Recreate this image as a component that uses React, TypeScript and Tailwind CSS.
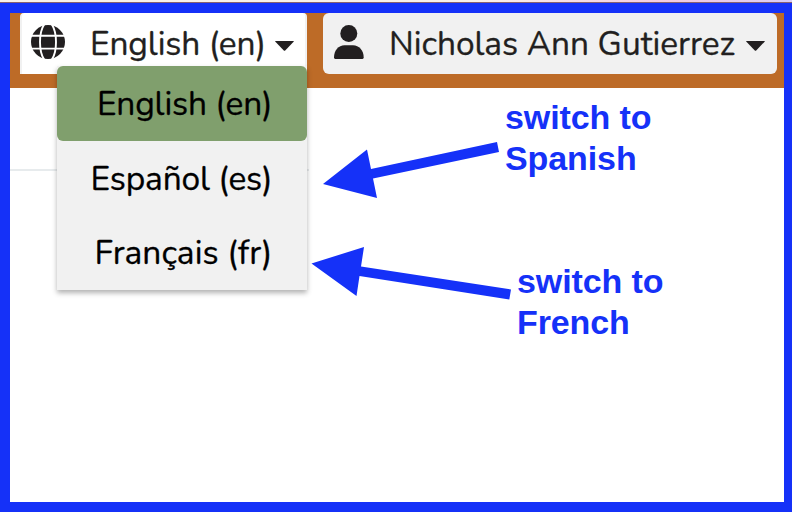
function Caret() {
  return (
    <svg className="h-[10px] w-[19px] shrink-0" viewBox="0 0 19 10" fill="#221f20">
      <path d="M0.6 0H18.4Q19.2 0 18.6 0.7L10.2 9.5Q9.5 10.2 8.8 9.5L0.4 0.7Q-0.2 0 0.6 0Z" />
    </svg>
  );
}

function Globe() {
  return (
    <svg className="mb-[4px] size-[34px] shrink-0" viewBox="0 0 34 34">
      <circle cx="17" cy="17" r="17" fill="#221f20" />
      <g fill="none" stroke="#fff" strokeWidth="1.9">
        <path d="M0 10.7H34M0 23.6H34" />
        <path d="M13.5 -1C9.2 5 9 11 9 17S9.2 29 13.5 35M20.5 -1C24.8 5 25 11 25 17S24.8 29 20.5 35" />
      </g>
    </svg>
  );
}

function Person() {
  return (
    <svg className="mb-[4px] h-[34px] w-[30px] shrink-0" viewBox="0 0 30 34" fill="#221f20">
      <circle cx="14.8" cy="8.5" r="8.5" />
      <path d="M1.2 34Q0 34 0 32.6C0 25.2 4.5 20.2 10.5 20.2H19C25 20.2 29.7 25.2 29.7 32.6Q29.7 34 28.5 34Z" />
    </svg>
  );
}

function Menu() {
  return (
    <ul className="absolute left-[37px] top-[53px] h-[224px] w-[250px] bg-[#f1f1f1] text-right text-black shadow-[0_3px_5px_rgba(0,0,0,0.3)]">
      <li className="h-[75px] rounded-[6px] bg-[#809f6d] pr-[34.5px] leading-[77px] tracking-[-0.15px]">English (en)</li>
      <li className="h-[75px] pr-[34.5px] leading-[77px] tracking-[-0.15px]">Español (es)</li>
      <li className="h-[74px] pr-[34.5px] leading-[75px] tracking-[0.05px]">Français (fr)</li>
    </ul>
  );
}

export default function App() {
  return (
    <div className="relative flex h-[512px] w-[792px] flex-col overflow-hidden bg-white font-['Nunito','Lato',sans-serif] text-[33.5px] [-webkit-text-stroke:0.3px_currentColor]">
      <div className="h-[3px] shrink-0 border-b border-[#8a6170] bg-gradient-to-r from-[#fbf1e9] from-60% via-[#f3cbe0] via-85% to-[#d9cdf5]" />
      <div className="flex flex-1 flex-col border-[10px] border-r-8 border-[#1531f8]">
        <header className="flex h-[75px] shrink-0 gap-4 bg-[#bd6b27] pl-[10px]">
          <div className="relative z-10 h-[61px] w-[287px]">
            <button className="flex h-[61px] w-[287px] items-center rounded-tl-[4px] rounded-tr-[4px] border-x-2 border-[#f1f1f1] bg-white pl-[9px] text-[#221f20]">
              <Globe />
              <span className="ml-[25px] mt-[2px] w-[185px] whitespace-nowrap text-left tracking-[-0.12px]">English (en)</span>
              <span className="mt-[4px]"><Caret /></span>
            </button>
            <Menu />
          </div>
          <button className="flex h-[61px] w-[454px] items-center rounded-[6px] bg-[#f1f1f1] pl-[11px] text-[#221f20]">
            <Person />
            <span className="ml-[25px] mt-[2px] w-[357px] whitespace-nowrap text-left tracking-[-0.05px]">Nicholas Ann Gutierrez</span>
            <span className="mt-[4px]"><Caret /></span>
          </button>
        </header>
        <div className="mt-[81px] h-[2px] w-[299px] bg-[#e7ebed]" />
      </div>
      <svg className="absolute inset-0 h-[512px] w-[792px]" viewBox="0 0 792 512" fill="#1531f8">
        <path d="M323 184L367 149.5L371 169L497 142L499 152L373 178.5L377 198Z" />
        <path d="M311.5 263.5L364 247L361 266.5L511 289.5L509.3 299.5L359.5 276L356.5 296Z" />
      </svg>
      <p className="absolute left-[505px] top-[97px] font-['Liberation_Sans',Arial,sans-serif] text-[34px] font-bold leading-[41px] tracking-[-0.1px] text-[#1531f8] [-webkit-text-stroke:0]">switch to<br />Spanish</p>
      <p className="absolute left-[517px] top-[261px] font-['Liberation_Sans',Arial,sans-serif] text-[34px] font-bold leading-[41px] tracking-[-0.1px] text-[#1531f8] [-webkit-text-stroke:0]">switch to<br />French</p>
    </div>
  );
}
